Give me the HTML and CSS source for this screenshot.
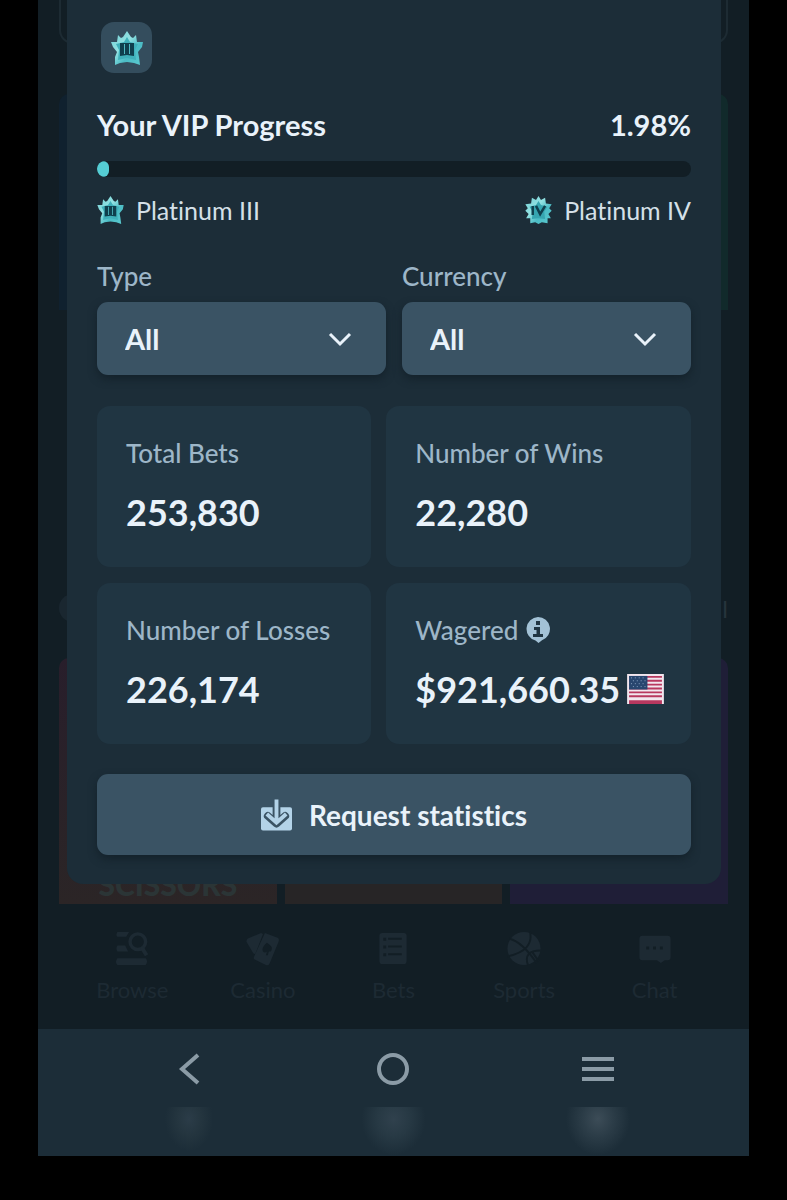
FILE: index.html
```html
<!DOCTYPE html>
<html lang="en">
<head>
<meta charset="utf-8">
<meta name="viewport" content="width=device-width, initial-scale=1">
<title>VIP Statistics</title>
<link rel="stylesheet" href="styles.css">
</head>
<body>
<svg width="0" height="0" class="sprite" aria-hidden="true">
  <defs>
    <linearGradient id="plat" x1="0" y1="0" x2="1" y2="1">
      <stop offset="0" stop-color="#6fcdd2"/>
      <stop offset="0.4" stop-color="#93e2e3"/>
      <stop offset="0.65" stop-color="#4bbcc5"/>
      <stop offset="1" stop-color="#5ccbd0"/>
    </linearGradient>
    <symbol id="star3" viewBox="0 0 32 34">
      <path fill="url(#plat)" d="M16 0l4 6 2 1 3-3 1 7 6 0-1 5-4 5 1 5 1 8-6-2-7-1-7 1-5 2 0-8 2-5-4-5-2-5 6 0 1-7 3 3 2-1z"/>
      <path fill="#3fb0ba" d="M16 6l3 5 8 2-3 6 1 10-9-2-9 2 1-10-3-6 8-2z"/>
      <path fill="#0f3f4d" d="M9 12h14v13l-7-1-7 1z"/>
      <path fill="#4fb9c2" d="M13 13h1v10h-1zM18 13h1v10h-1z"/>
    </symbol>
    <symbol id="star4" viewBox="0 0 32 34">
      <path fill="url(#plat)" d="M16 0l3 5 5-3 1 7 7 1-3 5 3 3-4 4 3 5-4 0 0 6-7-1-4 2-4-2-6 1 0-6-5 0 3-5-4-4 3-3-3-5 7-1 1-7 5 3z"/>
      <path fill="#36a5b0" d="M16 6l3 5 8 2-4 6 1 9-8-1-8 1 1-9-4-6 8-2z"/>
      <path fill="none" stroke="#0f3f4d" stroke-width="3" d="M9 12v11M13 12l5 10 6-10"/>
    </symbol>
  </defs>
</svg>
<div class="phone">
  <div class="app">
    <div class="behind" aria-hidden="true">
      <div class="banner"></div>
      <div class="tiles tiles-top"><i class="tile blue"></i><i class="tile clear"></i><i class="tile green"></i></div>
      <div class="heading"><i class="dot"></i><span>l</span></div>
      <div class="tiles tiles-bottom"><div class="tile red">SCISSORS</div><i class="tile brown"></i><i class="tile purple"></i></div>
    </div>
    <main class="modal">
      <div class="badge"><svg class="badge-star"><use href="#star3"/></svg></div>
      <div class="row title"><span id="vip">Your VIP Progress</span><span>1.98%</span></div>
      <div class="track" role="progressbar" aria-labelledby="vip" aria-valuenow="1.98" aria-valuemin="0" aria-valuemax="100"><div class="fill" style="width:1.98%"></div></div>
      <div class="row levels">
        <span class="level"><svg class="star"><use href="#star3"/></svg>Platinum III</span>
        <span class="level"><svg class="star"><use href="#star4"/></svg>Platinum IV</span>
      </div>
      <div class="filters">
        <div class="field">
          <label for="type">Type</label>
          <div class="select"><select id="type"><option>All</option></select><svg class="chevron" viewBox="0 0 24 16"><path d="M2 3l10 10L22 3"/></svg></div>
        </div>
        <div class="field">
          <label for="currency">Currency</label>
          <div class="select"><select id="currency"><option>All</option></select><svg class="chevron" viewBox="0 0 24 16"><path d="M2 3l10 10L22 3"/></svg></div>
        </div>
      </div>
      <div class="cards">
        <section class="card"><h2>Total Bets</h2><p>253,830</p></section>
        <section class="card"><h2>Number of Wins</h2><p>22,280</p></section>
        <section class="card"><h2>Number of Losses</h2><p>226,174</p></section>
        <section class="card">
          <h2>Wagered
            <svg class="info" viewBox="0 0 24 26"><path fill="#a3c2d6" d="M12 0a12 12 0 0 1 4 23.300l-3.500 2.700-3-2.400A12 12 0 0 1 12 0z"/><path fill="#203542" d="M10 4h4v4h-4zM8 10h6v7h3v3H7v-3h3.500v-4H8z"/></svg>
          </h2>
          <p>$921,660.35
            <svg class="flag" viewBox="0 0 38 31"><path fill="#f2e6ee" d="M0 0h38v31H0z"/><path stroke="#b8385f" stroke-width="2" d="M2 3h34M2 7h34M2 11h34M2 15h34M2 19h34M2 23h34"/><path fill="#b8385f" d="M2 27h34v4H2z"/><path fill="#28466f" d="M2 2h19v14H2z"/><path fill="none" stroke="#8ba5c4" stroke-width="1" stroke-dasharray="1 3" d="M4 4h16M6 7h14M4 10h16M6 13h14"/></svg>
          </p>
        </section>
      </div>
      <button class="request" type="button">
        <svg class="download" viewBox="0 0 32 32"><path fill="#b3d3e8" d="M2 8h28q2 0 2 2v20q0 2-2 2H2q-2 0-2-2V10q0-2 2-2z"/><path fill="none" stroke="#3a5364" stroke-width="8" stroke-linecap="round" stroke-linejoin="round" d="M16 6v18M7 17l9 8 9-8"/><path fill="none" stroke="#b3d3e8" stroke-width="4" d="M16 0v24M6 15l10 9 10-9"/></svg>
        Request statistics
      </button>
    </main>
  </div>
  <nav class="tabs">
    <a href="#browse"><svg viewBox="0 0 34 36"><path fill="currentColor" d="M2 1h12l-3 5H2q-2-2 0-5zM2 15h8l3 6H2q-2-3 0-6zM2 28h29q3 3 0 7H2q-3-3 0-7z"/><circle cx="23" cy="11" r="8" fill="none" stroke="currentColor" stroke-width="3.500"/><path stroke="currentColor" stroke-width="4" d="M27 17l5 8"/></svg>Browse</a>
    <a href="#casino"><svg viewBox="0 0 34 36"><path fill="currentColor" d="M1 8L15 2l2 1-8 21-2-1L0 11q0-2 1-3z"/><path fill="currentColor" fill-rule="evenodd" d="M19 2l13 5q2 1 1 4l-9 22q-1 3-4 2L8 29q-1-1 0-3zM21 12q-6 5-4 9 2 2 4 0l-1 4h2l1-4q3 1 3-3 1-2-5-6z"/></svg>Casino</a>
    <a href="#bets"><svg viewBox="0 0 34 36"><path fill="currentColor" fill-rule="evenodd" d="M6 2h22q3 0 3 3v25q0 4-3 4H6q-3 0-3-4V5q0-3 3-3zM7 7v3h3V7zM12 7v2h14V7zM7 15v3h3v-3zM12 15v2h14v-2zM7 23v3h3v-3zM12 23v2h14v-2z"/></svg>Bets</a>
    <a href="#sports"><svg viewBox="0 0 34 36"><circle cx="17" cy="18" r="17" fill="currentColor"/><path class="seam" d="M2 8q13 3 28 25M23 0q5 20-23 26M34 20q-18 0-13 15M25 21l7 10"/></svg>Sports</a>
    <a href="#chat"><svg viewBox="0 0 34 36"><path fill="currentColor" fill-rule="evenodd" d="M4 5h26q3 0 3 3v19q0 3-3 3h-3l-4 3-4-3H4q-3 0-3-3V8q0-3 3-3zM8 16v3h3v-3zM15 16v3h3v-3zM22 16v3h3v-3z"/></svg>Chat</a>
  </nav>
  <div class="system">
    <button type="button" aria-label="Back"><svg viewBox="0 0 34 34"><path d="M26 4L10 18l16 14"/></svg></button>
    <button type="button" aria-label="Home"><svg viewBox="0 0 34 34"><circle cx="17" cy="18" r="14"/></svg></button>
    <button type="button" aria-label="Menu"><svg viewBox="0 0 34 34"><path d="M1 8h32M1 18h32M1 28h32"/></svg></button>
  </div>
  <div class="glow" aria-hidden="true"><i class="faint"></i><i></i><i class="bright"></i></div>
</div>
</body>
</html>
```
FILE: styles.css
```css
* { box-sizing: border-box; }
body {
  margin: 0;
  background: #000;
  color: #e9f2fa;
  font-family: Lato, "Liberation Sans", sans-serif;
  font-variant-ligatures: none;
}
h2, p { margin: 0; }
svg { display: block; flex: none; }
.sprite { position: absolute; }
button, select { font: inherit; color: inherit; border: 0; font-variant-ligatures: none; }
.phone { margin: 0 38px 44px; background: #121e25; }
.app { display: grid; }
.behind, .modal { grid-area: 1 / 1; }

.behind { display: flex; flex-direction: column; padding: 0 21px; }
.behind i { display: block; }
.banner { height: 44px; border: 2px solid #1d2b33; border-top: 0; border-radius: 0 0 14px 14px; }
.tiles { display: grid; grid-template-columns: repeat(3, 1fr); gap: 8px; }
.tiles-top { height: 216px; margin-top: 50px; }
.tiles-bottom { flex: 1; }
.tile { border-radius: 10px 10px 0 0; }
.blue { background: #10212f; }
.green { background: #112a2b; }
.red {
  display: flex;
  align-items: flex-end;
  justify-content: center;
  background: linear-gradient(#281e2b, #2b2526);
  color: #2b3536;
  font-size: 30px;
  line-height: 40px;
  font-weight: 900;
}
.brown { background: #272526; }
.purple { background: #1f1e37; }
.heading { display: flex; justify-content: space-between; align-items: center; height: 36px; margin: 280px 0 32px; color: #26343c; font-size: 24px; }
.dot { width: 28px; height: 28px; border-radius: 50%; background: #1a2730; }

.modal {
  position: relative;
  margin: 0 28px 20px 29px;
  padding: 22px 30px 29px;
  background: #1c2d38;
  border-radius: 0 0 16px 16px;
}
.badge { display: grid; place-items: center; width: 51px; height: 51px; margin-left: 4px; border-radius: 13px; background: #344d5d; }
.badge-star { width: 32px; height: 34px; }
.row { display: flex; justify-content: space-between; }
.title { margin-top: 34px; font-size: 29px; line-height: 36px; font-weight: 700; }
.track { height: 16px; margin-top: 18px; border-radius: 8px; background: #121e25; overflow: hidden; }
.fill { height: 16px; border-radius: 8px; background: #55cdd4; }
.levels { margin-top: 17px; font-size: 25px; line-height: 32px; color: #d5e0e8; }
.level { display: flex; align-items: center; gap: 12px; }
.star { width: 27px; height: 28px; }
.filters { display: grid; grid-template-columns: 1fr 1fr; gap: 16px; margin-top: 34px; }
.field label, .card h2 { font-size: 26px; line-height: 32px; font-weight: 500; color: #9db6c8; }
.field label { display: block; }
.select { display: grid; align-items: center; margin-top: 10px; }
.select select {
  grid-area: 1 / 1;
  width: 100%;
  height: 73px;
  padding: 0 28px;
  appearance: none;
  border-radius: 11px;
  background: #3a5364;
  box-shadow: 0 4px 8px #14222b;
  font-size: 29px;
  font-weight: 700;
}
.chevron { grid-area: 1 / 1; justify-self: end; width: 24px; height: 16px; margin-right: 34px; pointer-events: none; }
.chevron path { fill: none; stroke: #e9f2fa; stroke-width: 3; }
.cards { display: grid; grid-template-columns: 9fr 10fr; gap: 16px 15px; margin-top: 31px; }
.card { height: 161px; padding: 31px 0 0 29px; border-radius: 13px; background: #203542; white-space: nowrap; }
.card h2, .card p { display: flex; align-items: center; }
.card h2 { gap: 8px; }
.card p { gap: 7px; margin-top: 22px; font-size: 36px; line-height: 42px; font-weight: 700; }
.info { width: 24px; height: 26px; }
.flag { width: 37px; height: 30px; }
.request {
  display: flex;
  align-items: center;
  justify-content: center;
  gap: 17px;
  width: 100%;
  height: 81px;
  margin-top: 30px;
  border-radius: 11px;
  background: #3a5364;
  box-shadow: 0 4px 8px #14222b;
  font-size: 28px;
  font-weight: 700;
}
.download { width: 31px; height: 32px; }

.tabs { display: grid; grid-template-columns: repeat(5, 1fr); height: 125px; padding: 27px 29px 0; }
.tabs a { display: flex; flex-direction: column; align-items: center; gap: 10px; color: #1d2a33; font-size: 22px; line-height: 28px; text-decoration: none; }
.tabs svg { width: 34px; height: 35px; }
.seam { fill: none; stroke: #121e25; stroke-width: 2; }
.system { display: grid; grid-template-columns: repeat(3, 1fr); height: 78px; padding: 0 49px; background: #1c2d38; }
.system button { display: grid; place-items: center; padding: 0; background: none; }
.system svg { width: 34px; height: 34px; fill: none; stroke: #8b9ba6; stroke-width: 4; }
.glow { display: grid; grid-template-columns: repeat(3, 1fr); height: 49px; padding: 0 49px; background: #1c2d38; }
.glow i { background: radial-gradient(32px 36px at 50% 12px, #30414d, #273944 50%, #1c2d38); }
.glow .faint { background: radial-gradient(24px 32px at 50% 12px, #2b3c48, #24353f 50%, #1c2d38); }
.glow .bright { background: radial-gradient(32px 36px at 50% 12px, #3c4c57, #2b3c47 50%, #1c2d38); }
```
